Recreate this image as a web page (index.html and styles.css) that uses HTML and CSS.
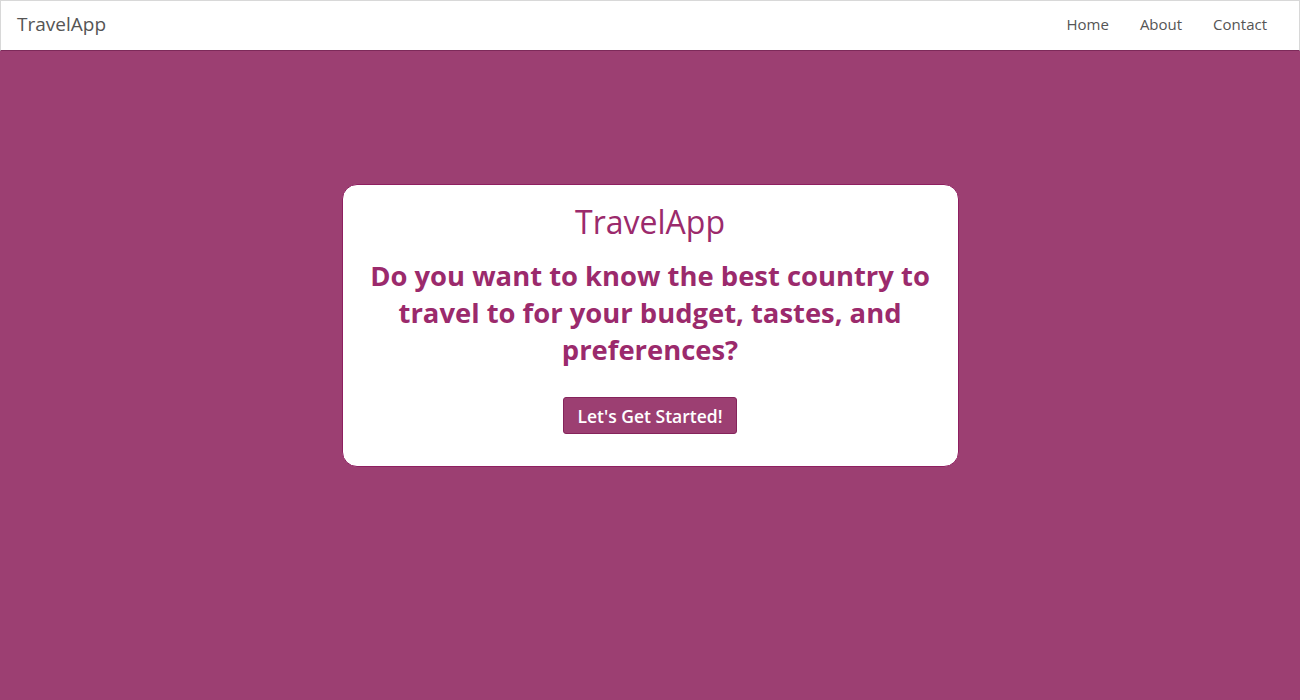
FILE: index.html
```html
<!DOCTYPE html>
<html lang="en">
<head>
<meta charset="utf-8">
<title>TravelApp</title>
<link rel="stylesheet" href="styles.css">
</head>
<body>
<header class="navbar">
  <a class="brand" href="#">TravelApp</a>
  <nav class="nav">
    <a href="#">Home</a>
    <a href="#">About</a>
    <a href="#">Contact</a>
  </nav>
</header>
<main class="hero">
  <section class="card">
    <h1 class="card-title">TravelApp</h1>
    <h2 class="card-lead">Do you want to know the best country to travel to for your budget, tastes, and preferences?</h2>
    <button class="btn" type="button">Let's Get Started!</button>
  </section>
</main>
</body>
</html>
```

FILE: styles.css
```css
* { box-sizing: border-box; }
html, body { margin: 0; padding: 0; height: 100%; }
body {
  font-family: "Open Sans", "Noto Sans", sans-serif;
  background: #9c3f72;
  color: #555;
}
.navbar {
  height: 51px;
  background: #fff;
  border: 1px solid #d8d8d8;
  border-bottom: 1px solid #7d2a5a;
  display: flex;
  align-items: center;
  justify-content: space-between;
  padding: 0 32px 0 16px;
}
.brand {
  font-size: 19px;
  color: #555;
  text-decoration: none;
  margin-top: -4px;
}
.nav {
  display: flex;
  gap: 31px;
}
.nav a {
  font-size: 15px;
  color: #555;
  text-decoration: none;
  margin-top: -4px;
}
.hero {
  display: flex;
  justify-content: center;
  padding-top: 133px;
}
.card {
  width: 617px;
  height: 283px;
  background: #fff;
  border: 1px solid #8e1f60;
  border-radius: 15px;
  text-align: center;
  padding: 0 20px;
}
.card-title {
  margin: 16px 0 0;
  font-size: 32px;
  font-weight: 400;
  line-height: 42px;
  color: #9b2a6c;
}
.card-lead {
  margin: 14px 0 0;
  font-size: 27.4px;
  font-weight: 700;
  line-height: 37px;
  color: #9b2a6c;
}
.btn {
  margin-top: 29px;
  width: 174px;
  height: 37px;
  background: #9c3f72;
  color: #fff;
  border: 1px solid #85245b;
  border-radius: 3px;
  font-family: "Open Sans", "Noto Sans", sans-serif;
  font-size: 17.5px;
  font-weight: 600;
  padding: 0;
  cursor: pointer;
}
```
